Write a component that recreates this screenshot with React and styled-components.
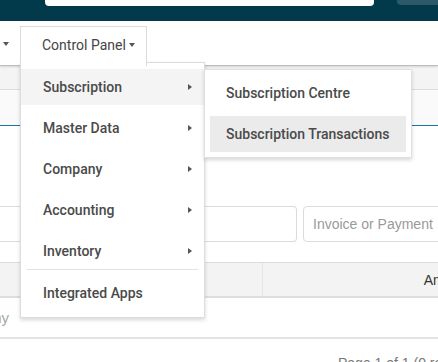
import React from 'react';
import styled, { createGlobalStyle } from 'styled-components';

const GlobalStyle = createGlobalStyle`
  html, body {
    margin: 0;
    padding: 0;
    background: #ffffff;
    overflow: hidden;
  }
  body {
    font-family: Roboto, "Liberation Sans", Arial, sans-serif;
  }
  * {
    box-sizing: border-box;
  }
`;

const Page = styled.div`
  width: 438px;
  height: 362px;
  overflow: hidden;
`;

const TopBar = styled.header`
  height: 21px;
  background: #033a4b;
  display: flex;
  align-items: flex-start;
`;

const SearchStub = styled.div`
  flex-shrink: 0;
  margin-left: 45px;
  width: 329px;
  height: 6px;
  background: #ffffff;
  border-radius: 0 0 4px 4px;
`;

const ButtonStub = styled.div`
  flex-shrink: 0;
  margin-left: 23px;
  width: 60px;
  height: 5px;
  background: #2b5969;
  border-radius: 0 0 4px 4px;
`;

const NavBar = styled.nav`
  position: relative;
  z-index: 5;
  height: 45px;
  background: #ffffff;
  border-bottom: 1px solid #bdbdbd;
  box-shadow: 0 1px 2px rgba(0, 0, 0, 0.12);
  display: flex;
  align-items: flex-end;
`;

const NavCaretItem = styled.div`
  width: 20px;
  align-self: center;
  padding-left: 3px;
  display: flex;
`;

const Caret = styled.span`
  display: inline-block;
  width: 0;
  height: 0;
  border-left: 3.5px solid transparent;
  border-right: 3.5px solid transparent;
  border-top: 4px solid #555555;
  margin-left: ${(p) => p.$gap || 0}px;
  margin-top: 1px;
`;

const TabWrap = styled.div`
  position: relative;
  align-self: flex-end;
  margin-bottom: -1px;
`;

const Tab = styled.div`
  position: relative;
  z-index: 3;
  width: 127px;
  height: 40px;
  padding: 8px 0 0 21px;
  background: #ffffff;
  border: 1px solid #dcdcdc;
  border-bottom: none;
  display: flex;
  align-items: center;
  font-size: 14px;
  line-height: 18px;
  color: #454545;
`;

const TabInner = styled.div`
  display: flex;
  align-items: center;
  height: 18px;
  margin-top: -12px;
`;

const Menu = styled.div`
  position: absolute;
  z-index: 2;
  top: 36px;
  left: 0;
  width: 185px;
  padding: 6px 0;
  background: #ffffff;
  border: 1px solid #dcdcdc;
  box-shadow: 0 2px 4px rgba(0, 0, 0, 0.16);
`;

const MenuItem = styled.div`
  position: relative;
  height: 36px;
  padding: 0 12px 0 22px;
  display: flex;
  align-items: center;
  justify-content: space-between;
  font-size: 14px;
  font-weight: 500;
  color: #4a4a4a;
  background: ${(p) => (p.$active ? '#f4f4f4' : 'transparent')};

  & + & {
    margin-top: 5px;
  }
`;

const Arrow = styled.span`
  width: 0;
  height: 0;
  border-top: 3.5px solid transparent;
  border-bottom: 3.5px solid transparent;
  border-left: 4px solid #555555;
`;

const Divider = styled.div`
  height: 1px;
  margin: 0 6px 5px;
  background: #e2e2e2;
`;

const SubMenu = styled.div`
  position: absolute;
  top: 0;
  left: 100%;
  width: 208px;
  padding: 5px;
  background: #ffffff;
  border: 1px solid #e0e0e0;
  box-shadow: 0 2px 4px rgba(0, 0, 0, 0.16);
`;

const SubItem = styled.div`
  height: 36px;
  padding-left: 16px;
  display: flex;
  align-items: center;
  font-size: 14px;
  font-weight: 500;
  color: #4a4a4a;
  white-space: nowrap;
  background: ${(p) => (p.$active ? '#ebebeb' : 'transparent')};

  & + & {
    margin-top: 5px;
  }
`;

const SubHeader = styled.div`
  height: 24px;
  background: #f4f4f4;
  border-bottom: 1px solid #dddddd;
`;

const Band = styled.div`
  height: 36px;
  background: #fafafa;
  border-bottom: 1px solid #1f6f9f;
`;

const Content = styled.main`
  width: 560px;
  font-family: "Liberation Sans", Arial, sans-serif;
`;

const FilterRow = styled.div`
  margin-top: 80px;
  display: flex;
  gap: 6px;
`;

const FilterInput = styled.div`
  height: 36px;
  width: ${(p) => p.$width}px;
  padding-left: 9px;
  display: flex;
  align-items: center;
  border: 1px solid #dcdcdc;
  border-left: ${(p) => (p.$cut ? 'none' : '1px solid #dcdcdc')};
  border-radius: ${(p) => (p.$cut ? '0 4px 4px 0' : '4px')};
  font-size: 14px;
  color: #9a9a9a;
  white-space: nowrap;
`;

const Table = styled.div`
  margin-top: 20px;
`;

const HeaderRow = styled.div`
  display: flex;
  height: 36px;
  background: #f3f3f3;
  border-top: 1px solid #dddddd;
  border-bottom: 2px solid #dddddd;
`;

const HeaderCell = styled.div`
  width: ${(p) => p.$width}px;
  display: flex;
  align-items: center;
  justify-content: ${(p) => (p.$right ? 'flex-end' : 'flex-start')};
  padding-right: ${(p) => (p.$right ? 8 : 0)}px;
  border-right: ${(p) => (p.$divider ? '1px solid #e4e4e4' : 'none')};
  font-size: 14px;
  color: #333333;
`;

const BodyRow = styled.div`
  display: flex;
  height: 41px;
  border-bottom: 2px solid #e4e4e4;
`;

const EmptyCell = styled.div`
  width: 9px;
  display: flex;
  align-items: center;
  justify-content: flex-end;
  font-size: 15px;
  color: #a8a8a8;
  white-space: nowrap;
`;

const Pager = styled.div`
  padding: 16px 0 0 338px;
  font-size: 14px;
  color: #777777;
  white-space: nowrap;
`;

const menuItems = [
  { label: 'Subscription', sub: true, active: true },
  { label: 'Master Data', sub: true },
  { label: 'Company', sub: true },
  { label: 'Accounting', sub: true },
  { label: 'Inventory', sub: true },
];

export default function App() {
  return (
    <Page>
      <GlobalStyle />
      <TopBar>
        <SearchStub />
        <ButtonStub />
      </TopBar>

      <NavBar>
        <NavCaretItem>
          <Caret />
        </NavCaretItem>
        <TabWrap>
          <Tab>
            <TabInner>
              Control Panel
              <Caret $gap={3} />
            </TabInner>
          </Tab>
          <Menu>
            {menuItems.map((item) => (
              <MenuItem key={item.label} $active={item.active}>
                {item.label}
                {item.sub && <Arrow />}
                {item.active && (
                  <SubMenu>
                    <SubItem>Subscription Centre</SubItem>
                    <SubItem $active>Subscription Transactions</SubItem>
                  </SubMenu>
                )}
              </MenuItem>
            ))}
            <Divider />
            <MenuItem>Integrated Apps</MenuItem>
          </Menu>
        </TabWrap>
      </NavBar>

      <SubHeader />
      <Band />

      <Content>
        <FilterRow>
          <FilterInput $width={297} $cut />
          <FilterInput $width={220}>Invoice or Payment</FilterInput>
        </FilterRow>

        <Table>
          <HeaderRow>
            <HeaderCell $width={263} $divider />
            <HeaderCell $width={217} $right>Amount</HeaderCell>
          </HeaderRow>
          <BodyRow>
            <EmptyCell>Company</EmptyCell>
          </BodyRow>
        </Table>

        <Pager>Page 1 of 1 (0 records)</Pager>
      </Content>
    </Page>
  );
}
